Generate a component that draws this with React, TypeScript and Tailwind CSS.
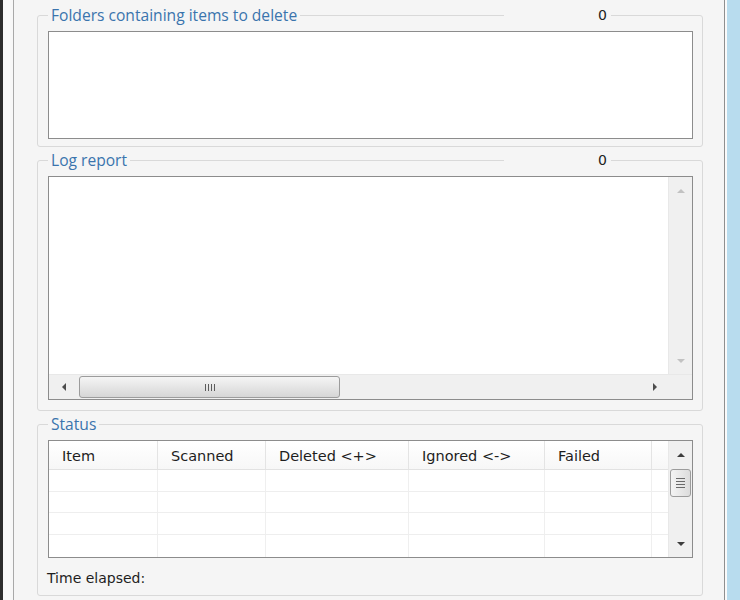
import type { ReactNode } from "react";

const PANEL = "bg-[#f5f5f5]";

function Arrow({ dir, color = "#4d4d4d" }: { dir: "up" | "down" | "left" | "right"; color?: string }) {
  const pts = {
    up: "0,5 4,1 8,5",
    down: "0,1 4,5 8,1",
    left: "5,0 1,4 5,8",
    right: "1,0 5,4 1,8",
  }[dir];
  const vertical = dir === "up" || dir === "down";
  return (
    <svg width={vertical ? 8 : 6} height={vertical ? 6 : 8} viewBox={vertical ? "0 0 8 6" : "0 0 6 8"}>
      <polygon points={pts} fill={color} />
    </svg>
  );
}

function GroupBox({
  title,
  count,
  height,
  children,
}: {
  title: string;
  count?: string;
  height: string;
  children: ReactNode;
}) {
  return (
    <div className={`relative ${height} border border-[#d9d9d9] rounded-[3px] pt-[15px] pl-[10px] pr-[9px]`}>
      <span className={`absolute left-[10px] -top-[11px] px-[3px] ${PANEL} text-[15.6px] leading-[20px] text-[#3a74ad]`}>
        {title}
      </span>
      {count !== undefined && (
        <span
          className={`absolute left-[466px] -top-[11px] w-[107px] pr-[4px] text-right ${PANEL} text-[14px] leading-[20px] text-[#222] font-['DejaVu_Sans']`}
        >
          {count}
        </span>
      )}
      {children}
    </div>
  );
}

function VScroll({ enabled }: { enabled: boolean }) {
  const arrowColor = enabled ? "#3d3d3d" : "#c2c2c2";
  return (
    <div className="w-[24px] h-full flex flex-col bg-[#f0f0f0] border-l border-[#e8e8e8]">
      <div className="h-[28px] flex items-center justify-center">
        <Arrow dir="up" color={arrowColor} />
      </div>
      <div className="flex-1 px-[1px]">
        {enabled && (
          <div className="h-[28px] rounded-[3px] border border-[#9c9c9c] bg-gradient-to-r from-[#f4f4f4] to-[#dcdcdc] flex flex-col items-center justify-center gap-[2px]">
            <div className="w-[9px] h-px bg-[#6a6a6a]" />
            <div className="w-[9px] h-px bg-[#6a6a6a]" />
            <div className="w-[9px] h-px bg-[#6a6a6a]" />
            <div className="w-[9px] h-px bg-[#6a6a6a]" />
          </div>
        )}
      </div>
      <div className="h-[26px] flex items-center justify-center">
        <Arrow dir="down" color={arrowColor} />
      </div>
    </div>
  );
}

const columns = [
  { label: "Item", w: "w-[109px]" },
  { label: "Scanned", w: "w-[108px]" },
  { label: "Deleted <+>", w: "w-[143px]" },
  { label: "Ignored <->", w: "w-[136px]" },
  { label: "Failed", w: "w-[107px]" },
];

export default function App() {
  return (
    <div className={`w-[740px] h-[600px] flex overflow-hidden ${PANEL} font-['Open_Sans',sans-serif]`}>
      <div className="w-[3px] bg-[#2c2c2c]" />
      <div className="w-[10px] bg-[#f7f7f7]" />
      <div className="w-px bg-[#a8a8a8]" />

      <div className="w-[710px] flex flex-col gap-[13px] pt-[15px] pl-[23px] pr-[21px]">
        {/* Folders */}
        <GroupBox title="Folders containing items to delete" count="0" height="h-[132px]">
          <div className="h-[108px] bg-white border border-[#8c8c8c]" />
        </GroupBox>

        {/* Log report */}
        <GroupBox title="Log report" count="0" height="h-[251px]">
          <div className="h-[224px] bg-white border border-[#8c8c8c] flex flex-col">
            <div className="flex-1 flex">
              <div className="flex-1" />
              <VScroll enabled={false} />
            </div>
            <div className="h-[25px] flex bg-[#f0f0f0] border-t border-[#e8e8e8]">
              <div className="w-[30px] flex items-center justify-center">
                <Arrow dir="left" />
              </div>
              <div className="flex-1 py-[1px] flex">
                <div className="w-[261px] rounded-[3px] border border-[#9c9c9c] bg-gradient-to-b from-[#f5f5f5] to-[#d6d6d6] flex items-center justify-center gap-[2px]">
                  <div className="w-px h-[7px] bg-[#5c5c5c]" />
                  <div className="w-px h-[7px] bg-[#5c5c5c]" />
                  <div className="w-px h-[7px] bg-[#5c5c5c]" />
                  <div className="w-px h-[7px] bg-[#5c5c5c]" />
                </div>
              </div>
              <div className="w-[26px] flex items-center justify-center">
                <Arrow dir="right" />
              </div>
              <div className="w-[24px] bg-[#f0f0f0]" />
            </div>
          </div>
        </GroupBox>

        {/* Status */}
        <GroupBox title="Status" height="h-[172px]">
          <div className="h-[118px] bg-white border border-[#8c8c8c] flex font-['DejaVu_Sans',sans-serif] text-[14.5px] text-[#1e1e1e]">
            <div className="flex-1 flex flex-col">
              <div className="h-[29px] flex border-b border-[#e2e2e2] bg-gradient-to-b from-white to-[#f7f7f7]">
                {columns.map((c) => (
                  <div key={c.label} className={`${c.w} border-r border-[#e4e4e4] pl-[13px] pt-[4px] flex items-center`}>
                    {c.label}
                  </div>
                ))}
                <div className="flex-1" />
              </div>
              {[0, 1, 2, 3].map((r) => (
                <div key={r} className="h-[22px] flex border-b border-[#eeeeee] last:border-b-0">
                  {columns.map((c) => (
                    <div key={c.label} className={`${c.w} border-r border-[#efefef]`} />
                  ))}
                </div>
              ))}
            </div>
            <VScroll enabled />
          </div>
          <div className="mt-[10px] font-['DejaVu_Sans',sans-serif] text-[14px] leading-[20px] text-[#1e1e1e] -ml-px">
            Time elapsed:
          </div>
        </GroupBox>
      </div>

      <div className="w-px bg-[#8f8f8f]" />
      <div className="w-[2px] bg-[#fafafa]" />
      <div className="flex-1 bg-[#b8dcee]" />
    </div>
  );
}
